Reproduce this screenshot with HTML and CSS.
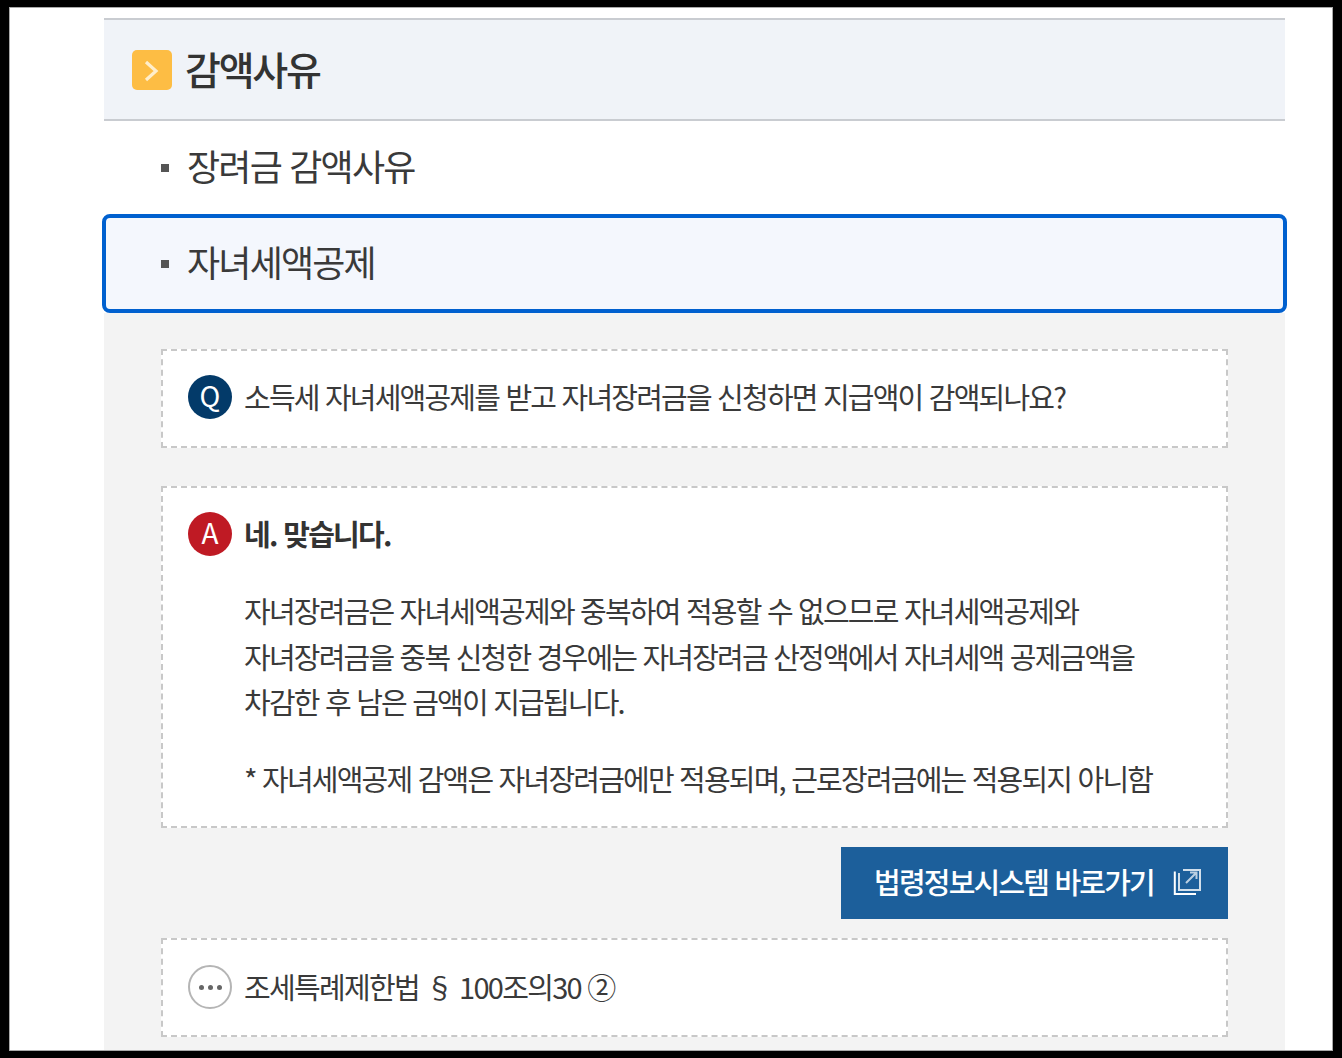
FILE: index.html
```html
<!DOCTYPE html>
<html lang="ko">
<head>
<meta charset="utf-8">
<title>감액사유</title>
<link rel="stylesheet" href="styles.css">
</head>
<body>
<div class="screen">
  <div class="content">
    <h2 class="section-head">
      <span class="head-icon"><svg width="40" height="40" viewBox="0 0 40 40"><path d="M14 12 L24 21 L14 30" fill="none" stroke="#ffeecb" stroke-width="3.2"/></svg></span>
      <span class="head-title">감액사유</span>
    </h2>
    <div class="item"><span class="bullet"></span><span class="item-text">장려금 감액사유</span></div>
    <div class="item item-active"><span class="bullet"></span><span class="item-text">자녀세액공제</span></div>
    <div class="panel">
      <div class="box box-q">
        <span class="badge badge-q">Q</span>
        <p class="line">소득세 자녀세액공제를 받고 자녀장려금을 신청하면 지급액이 감액되나요?</p>
      </div>
      <div class="box box-a">
        <div class="a-head">
          <span class="badge badge-a">A</span>
          <p class="line line-strong">네. 맞습니다.</p>
        </div>
        <p class="body-text">자녀장려금은 자녀세액공제와 중복하여 적용할 수 없으므로 자녀세액공제와<br>자녀장려금을 중복 신청한 경우에는 자녀장려금 산정액에서 자녀세액 공제금액을<br>차감한 후 남은 금액이 지급됩니다.</p>
        <p class="body-note">* 자녀세액공제 감액은 자녀장려금에만 적용되며, 근로장려금에는 적용되지 아니함</p>
      </div>
      <div class="btn-row">
        <a class="law-btn"><span class="btn-text">법령정보시스템 바로가기</span>
          <svg class="ext" width="28" height="28" viewBox="0 0 28 28" fill="none" stroke="#fff" stroke-width="2"><path d="M1.8 3.5V26H23"/><path d="M10 2H27V22H6V5" opacity=".8"/><path d="M13 15L23 5M17 4.5H23.5V11" opacity=".7"/></svg>
        </a>
      </div>
      <div class="box box-law">
        <span class="badge badge-more"><i></i><i></i><i></i></span>
        <p class="line">조세특례제한법 § 100조의30 ②</p>
      </div>
    </div>
  </div>
</div>
</body>
</html>
```
FILE: styles.css
```css
* { box-sizing: border-box; }
html, body { margin: 0; height: 100%; }
body {
  background: #000;
  padding: 7px 9px 7px 9px;
  font-family: "Noto Sans CJK KR", "Noto Sans", sans-serif;
  color: #333;
  overflow: hidden;
}
.screen {
  height: 1044px;
  background: #fff;
  border: 1px solid #a9a9a9;
  overflow: hidden;
  padding: 10px 47px 0 94px;
}
.section-head {
  display: flex;
  align-items: center;
  gap: 13px;
  height: 103px;
  margin: 0;
  padding: 1px 0 0 28px;
  background: #f0f3f8;
  border-top: 2px solid #c9ccd1;
  border-bottom: 2px solid #c9ccd1;
}
.head-icon {
  display: block;
  width: 40px;
  height: 40px;
  border-radius: 5px;
  background: #fdbd44;
}
.head-icon svg { display: block; }
.head-title {
  font-size: 39px;
  font-weight: 500;
  letter-spacing: -2.2px;
  line-height: 1;
  padding-bottom: 3px;
}
.item {
  display: flex;
  align-items: center;
  gap: 19px;
  height: 93px;
  padding-left: 57px;
  font-size: 36px;
  letter-spacing: -1.8px;
  color: #3a3a3a;
}
.item-text { padding-bottom: 6px; margin-left: -1px; }
.bullet {
  width: 8px;
  height: 8px;
  background: #555;
}
.item-active {
  height: 99px;
  margin: 0 -2px;
  padding-left: 55px;
  background: #f4f7fd;
  border: 4px solid #0060cf;
  border-radius: 8px;
}
.panel {
  background: #f3f3f3;
  padding: 36px 57px 20px;
  display: flex;
  flex-direction: column;
}
.box {
  background: #fff;
  border: 2px dashed #c8c8c8;
}
.box-q, .box-law {
  display: flex;
  align-items: center;
  gap: 12px;
  height: 99px;
  padding-left: 25px;
}
.box-q { margin-bottom: 38px; padding-bottom: 3px; }
.box-law { padding-bottom: 1px; }
.box-q .line, .box-law .line { padding-bottom: 2px; }
.box-a {
  height: 342px;
  padding: 23px 25px 0;
}
.a-head {
  display: flex;
  align-items: center;
  gap: 12px;
}
.a-head .line { padding-bottom: 2px; }
.badge {
  flex: none;
  display: flex;
  align-items: center;
  justify-content: center;
  width: 44px;
  height: 44px;
  padding-bottom: 4px;
  border-radius: 50%;
  color: #fff;
  font-size: 28px;
  line-height: 1;
}
.badge-q { background: #033a69; }
.badge-a { background: #bf1a24; }
.badge-more {
  gap: 4px;
  padding-bottom: 0;
  background: #fff;
  border: 2px solid #b5b5b5;
}
.badge-more i {
  width: 5px;
  height: 5px;
  border-radius: 50%;
  background: #666;
}
.line {
  margin: 0;
  font-size: 29px;
  letter-spacing: -1.8px;
  line-height: 44px;
  color: #3a3a3a;
}
.box-law .line { letter-spacing: -1.7px; }
.line-strong {
  font-weight: 700;
  color: #333;
  letter-spacing: -1.7px;
}
.body-text {
  margin: 31px 0 0 56px;
  font-size: 29px;
  letter-spacing: -1.8px;
  line-height: 45.5px;
  color: #3a3a3a;
}
.body-note {
  margin: 31px 0 0 56px;
  font-size: 29px;
  letter-spacing: -1.8px;
  line-height: 45.5px;
  color: #3a3a3a;
  white-space: nowrap;
}
.btn-row {
  display: flex;
  justify-content: flex-end;
  margin: 19px 0;
}
.law-btn {
  display: flex;
  align-items: center;
  justify-content: space-between;
  width: 387px;
  height: 72px;
  padding: 0 27px 0 33px;
  background: #1c5f9b;
  color: #fff;
  font-size: 29px;
  font-weight: 500;
  letter-spacing: -1.8px;
}
.btn-text { padding-bottom: 4px; }
.ext { margin-bottom: 2px; }
```
